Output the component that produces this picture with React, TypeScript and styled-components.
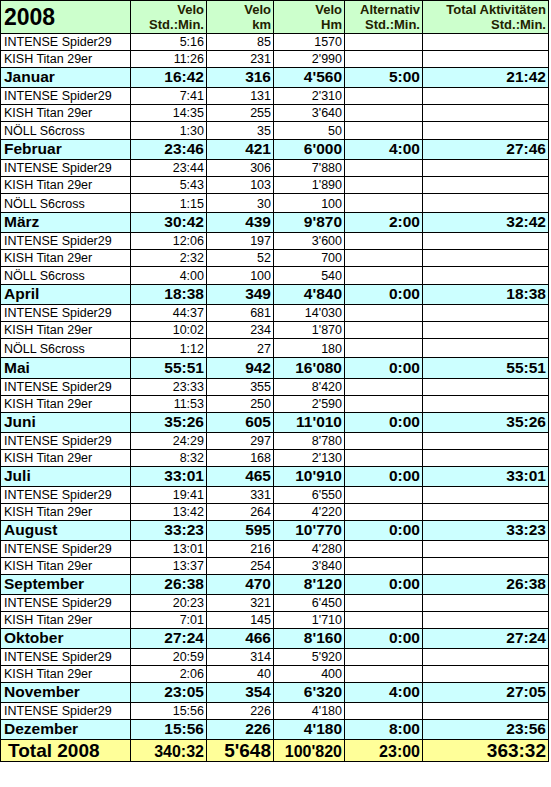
import styled, { createGlobalStyle } from "styled-components";

const GlobalStyle = createGlobalStyle`
  body {
    margin: 0;
    background: #ffffff;
    font-family: "Liberation Sans", Arial, sans-serif;
    color: #000000;
  }
`;

type Kind = "head" | "bike" | "month" | "total";

const BG: Record<Kind, string> = {
  head: "#ccffcc",
  bike: "#ffffff",
  month: "#ccffff",
  total: "#ffff99",
};

const HEIGHT: Record<Kind, number> = {
  head: 33,
  bike: 17,
  month: 20,
  total: 22,
};

const Sheet = styled.div`
  width: 549px;
  border-left: 1px solid #000;
  border-top: 1px solid #000;
  box-sizing: border-box;
`;

const Row = styled.div<{ $kind: Kind; $h?: number }>`
  display: grid;
  grid-template-columns: 130px 76px 67px 71px 78px 126px;
  height: ${(p) => p.$h ?? HEIGHT[p.$kind]}px;
  background: ${(p) => BG[p.$kind]};
  font-size: ${(p) =>
    p.$kind === "bike" ? "12.5px" : p.$kind === "month" ? "15.5px" : "13px"};
  font-weight: ${(p) => (p.$kind === "bike" ? 400 : 700)};
`;

const Cell = styled.div<{ $left?: boolean; $size?: number }>`
  box-sizing: border-box;
  border-right: 1px solid #000;
  border-bottom: 1px solid #000;
  display: flex;
  align-items: flex-end;
  justify-content: ${(p) => (p.$left ? "flex-start" : "flex-end")};
  padding: 0 2px 1px 3px;
  line-height: 1.15;
  white-space: nowrap;
  overflow: hidden;
  ${(p) => (p.$size ? `font-size: ${p.$size}px; line-height: 1;` : "")}
`;

const HeadCell = styled(Cell)`
  flex-direction: column;
  align-items: flex-end;
  justify-content: flex-end;
  text-align: right;
  line-height: 15px;
  color: #222200;
  padding-bottom: 1px;
`;

const Year = styled(Cell)`
  font-size: 23px;
  align-items: center;
  padding-top: 1px;
`;

const TotalLabel = styled(Cell)`
  font-size: 19px;
  line-height: 1;
  padding-left: 7px;
  align-items: center;
`;

type Bike = [string, string, string, string];

interface Month {
  name: string;
  time: string;
  km: string;
  hm: string;
  alt: string;
  total: string;
  bikes: Bike[];
  lastBikeH?: number;
  rowH?: number;
}

const INT = "INTENSE Spider29";
const KISH = "KISH Titan 29er";
const NOLL = "NÖLL S6cross";

const months: Month[] = [
  {
    name: "Januar", time: "16:42", km: "316", hm: "4'560", alt: "5:00", total: "21:42",
    bikes: [[INT, "5:16", "85", "1570"], [KISH, "11:26", "231", "2'990"]],
  },
  {
    name: "Februar", time: "23:46", km: "421", hm: "6'000", alt: "4:00", total: "27:46",
    bikes: [[INT, "7:41", "131", "2'310"], [KISH, "14:35", "255", "3'640"], [NOLL, "1:30", "35", "50"]],
    lastBikeH: 18,
  },
  {
    name: "März", time: "30:42", km: "439", hm: "9'870", alt: "2:00", total: "32:42",
    bikes: [[INT, "23:44", "306", "7'880"], [KISH, "5:43", "103", "1'890"], [NOLL, "1:15", "30", "100"]],
    lastBikeH: 19,
  },
  {
    name: "April", time: "18:38", km: "349", hm: "4'840", alt: "0:00", total: "18:38",
    bikes: [[INT, "12:06", "197", "3'600"], [KISH, "2:32", "52", "700"], [NOLL, "4:00", "100", "540"]],
    lastBikeH: 18,
  },
  {
    name: "Mai", time: "55:51", km: "942", hm: "16'080", alt: "0:00", total: "55:51",
    bikes: [[INT, "44:37", "681", "14'030"], [KISH, "10:02", "234", "1'870"], [NOLL, "1:12", "27", "180"]],
    lastBikeH: 19,
    rowH: 21,
  },
  {
    name: "Juni", time: "35:26", km: "605", hm: "11'010", alt: "0:00", total: "35:26",
    bikes: [[INT, "23:33", "355", "8'420"], [KISH, "11:53", "250", "2'590"]],
  },
  {
    name: "Juli", time: "33:01", km: "465", hm: "10'910", alt: "0:00", total: "33:01",
    bikes: [[INT, "24:29", "297", "8'780"], [KISH, "8:32", "168", "2'130"]],
  },
  {
    name: "August", time: "33:23", km: "595", hm: "10'770", alt: "0:00", total: "33:23",
    bikes: [[INT, "19:41", "331", "6'550"], [KISH, "13:42", "264", "4'220"]],
  },
  {
    name: "September", time: "26:38", km: "470", hm: "8'120", alt: "0:00", total: "26:38",
    bikes: [[INT, "13:01", "216", "4'280"], [KISH, "13:37", "254", "3'840"]],
  },
  {
    name: "Oktober", time: "27:24", km: "466", hm: "8'160", alt: "0:00", total: "27:24",
    bikes: [[INT, "20:23", "321", "6'450"], [KISH, "7:01", "145", "1'710"]],
  },
  {
    name: "November", time: "23:05", km: "354", hm: "6'320", alt: "4:00", total: "27:05",
    bikes: [[INT, "20:59", "314", "5'920"], [KISH, "2:06", "40", "400"]],
  },
  {
    name: "Dezember", time: "15:56", km: "226", hm: "4'180", alt: "8:00", total: "23:56",
    bikes: [[INT, "15:56", "226", "4'180"]],
  },
];

function BikeRow({ bike, h }: { bike: Bike; h?: number }) {
  return (
    <Row $kind="bike" $h={h}>
      <Cell $left>{bike[0]}</Cell>
      <Cell>{bike[1]}</Cell>
      <Cell>{bike[2]}</Cell>
      <Cell>{bike[3]}</Cell>
      <Cell />
      <Cell />
    </Row>
  );
}

export default function App() {
  return (
    <>
      <GlobalStyle />
      <Sheet>
        <Row $kind="head">
          <Year $left>2008</Year>
          <HeadCell><span>Velo</span><span>Std.:Min.</span></HeadCell>
          <HeadCell><span>Velo</span><span>km</span></HeadCell>
          <HeadCell><span>Velo</span><span>Hm</span></HeadCell>
          <HeadCell><span>Alternativ</span><span>Std.:Min.</span></HeadCell>
          <HeadCell><span>Total Aktivitäten</span><span>Std.:Min.</span></HeadCell>
        </Row>
        {months.map((m) => (
          <div key={m.name}>
            {m.bikes.map((b, i) => (
              <BikeRow
                key={i}
                bike={b}
                h={i === m.bikes.length - 1 ? m.lastBikeH : undefined}
              />
            ))}
            <Row $kind="month" $h={m.rowH}>
              <Cell $left>{m.name}</Cell>
              <Cell>{m.time}</Cell>
              <Cell>{m.km}</Cell>
              <Cell>{m.hm}</Cell>
              <Cell>{m.alt}</Cell>
              <Cell>{m.total}</Cell>
            </Row>
          </div>
        ))}
        <Row $kind="total">
          <TotalLabel $left>Total 2008</TotalLabel>
          <Cell $size={16}>340:32</Cell>
          <Cell $size={19}>5'648</Cell>
          <Cell $size={16}>100'820</Cell>
          <Cell $size={16}>23:00</Cell>
          <Cell $size={19}>363:32</Cell>
        </Row>
      </Sheet>
    </>
  );
}
